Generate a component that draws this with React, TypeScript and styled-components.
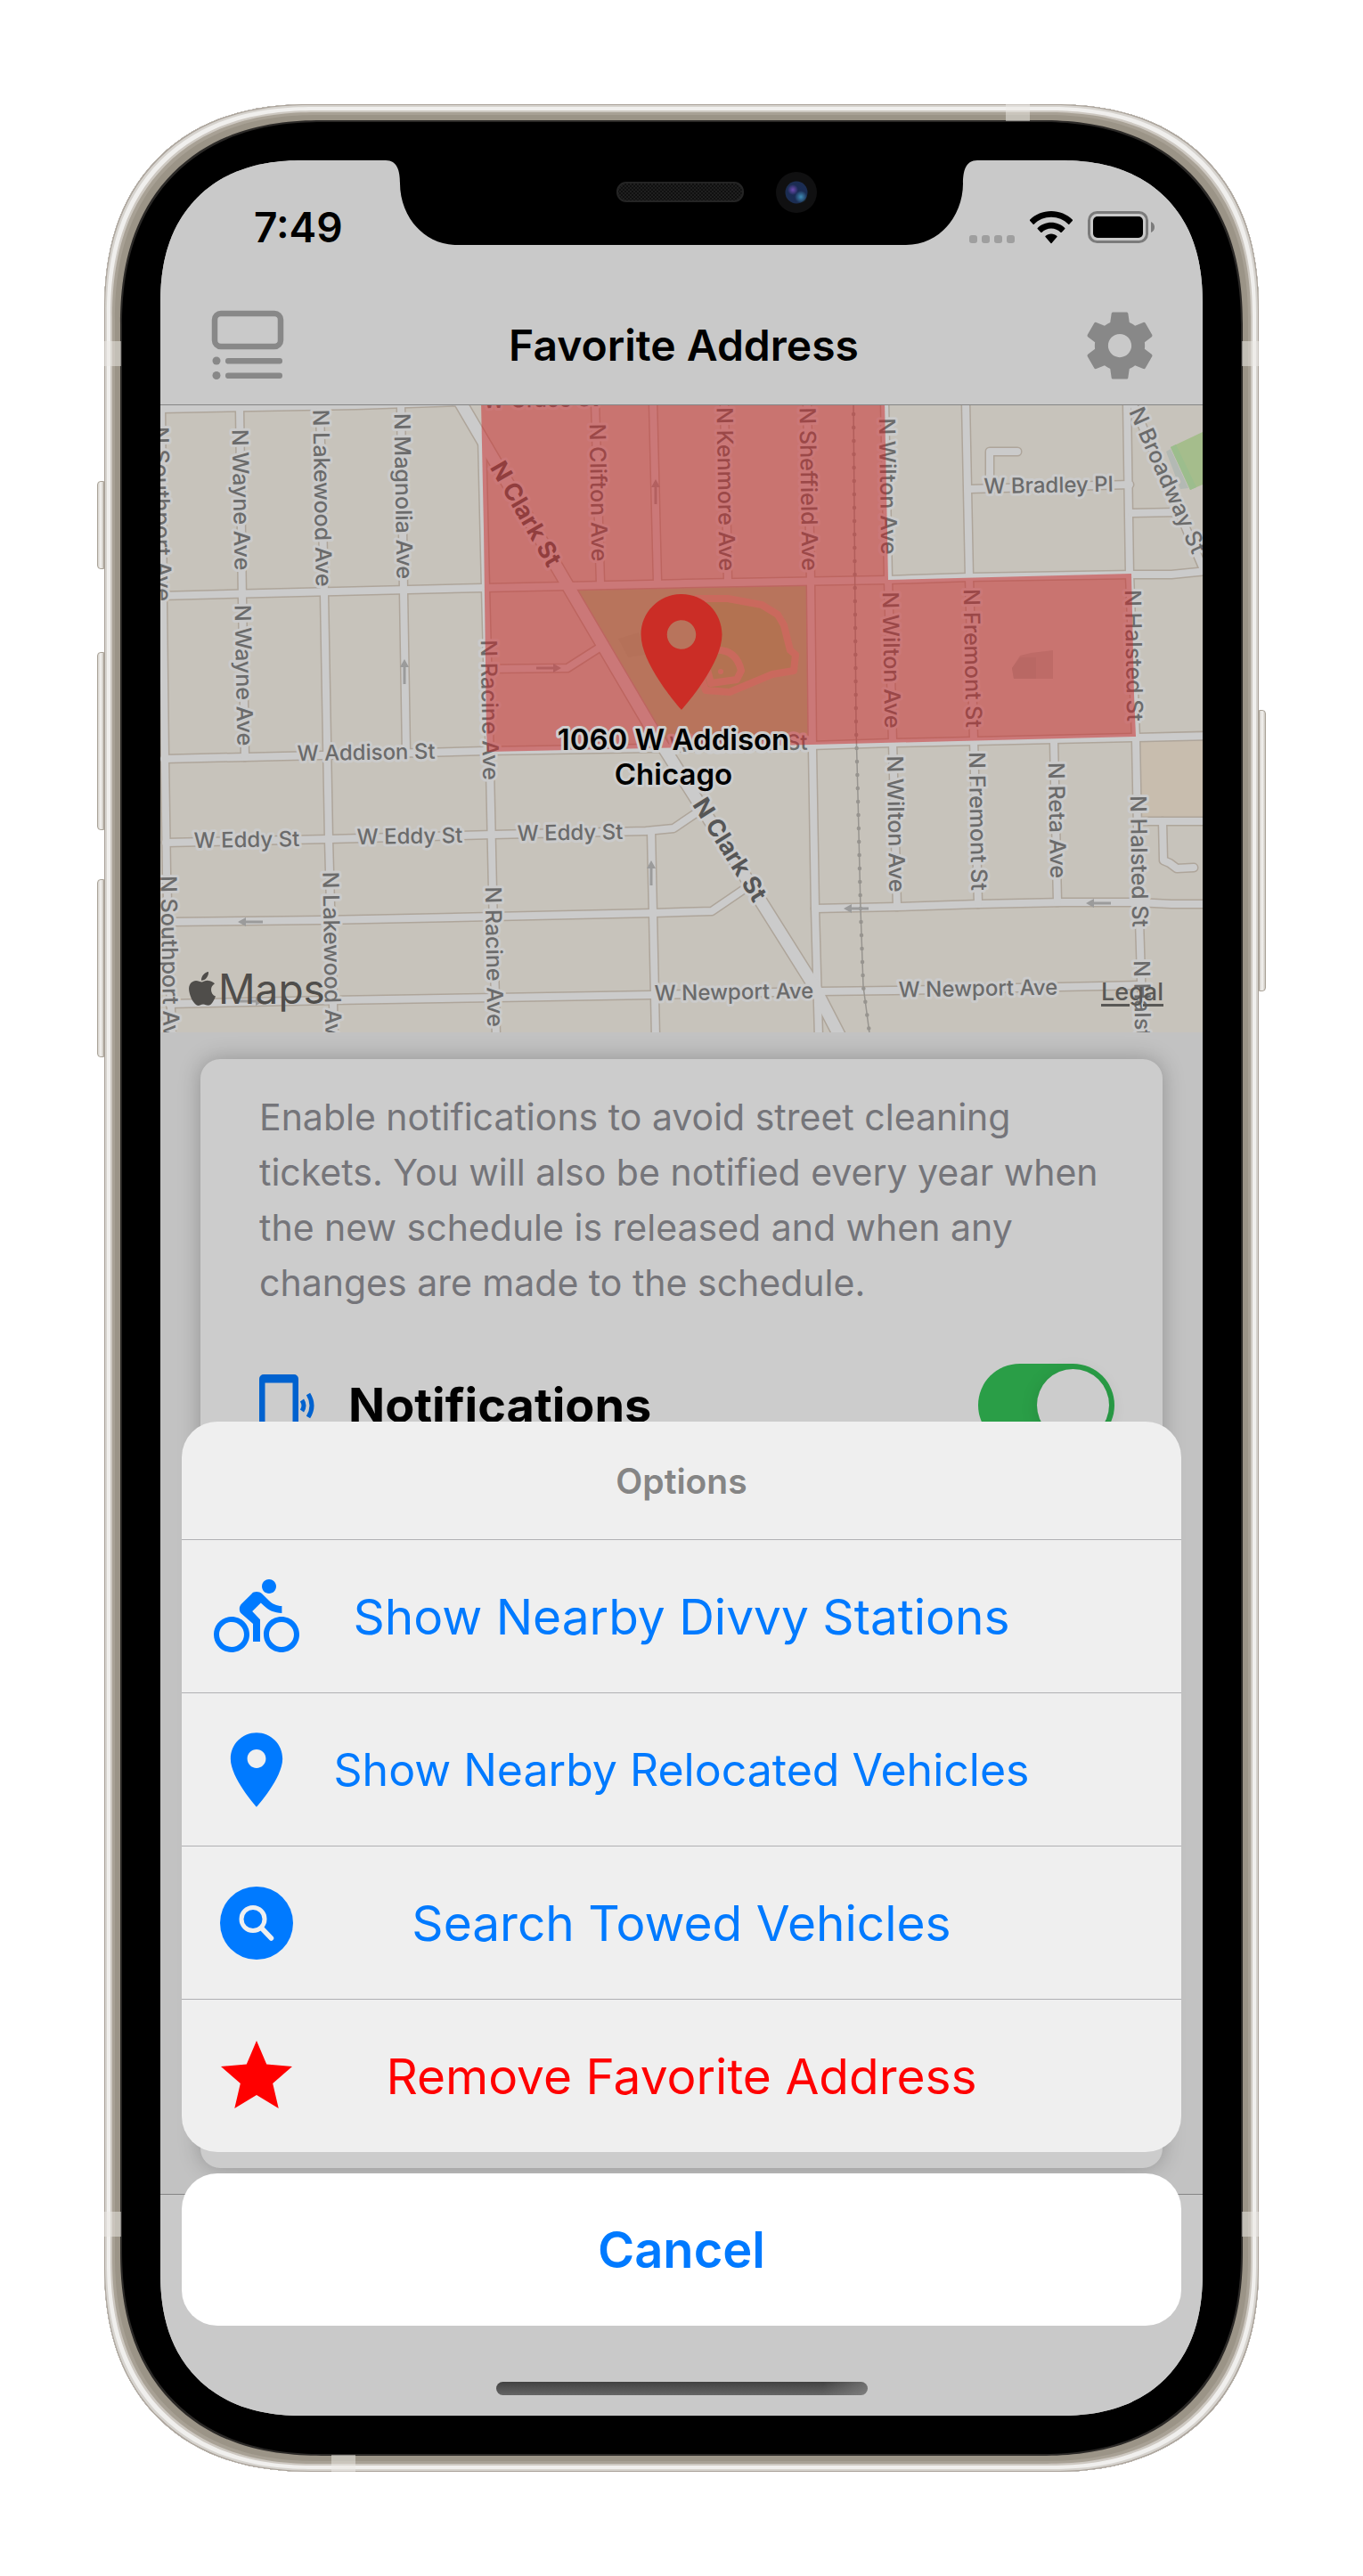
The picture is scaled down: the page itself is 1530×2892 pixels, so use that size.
import React from "react";
import styled, { createGlobalStyle } from "styled-components";

const font = `Inter, "Liberation Sans", sans-serif`;

const blue = "#007aff";
const red = "#ff0000";

const GlobalStyle = createGlobalStyle`
  *, *::before, *::after { box-sizing: border-box; }
  body { margin: 0; background: #fff; font-family: ${font}; }
  button { font-family: inherit; }
`;

/* ---------- Device ---------- */

const Page = styled.main`
  display: flex;
  justify-content: center;
  padding: 117px;
`;

const Device = styled.div`
  position: relative;
  width: 100%;
  max-width: 1296px;
  padding: 63px;
  background: #000;
  border-radius: 205px;
  box-shadow:
    inset 0 0 0 1px #a9a198,
    inset 0 0 0 3px #d6d3ce,
    inset 0 0 0 7px #f0efed,
    inset 0 0 0 9px #cdc8c1,
    inset 0 0 0 12px #a8a195,
    inset 0 0 0 18px #9b9487,
    inset 0 0 0 20px #2b2927;
  @supports (corner-shape: superellipse(1.2)) {
    border-radius: 232px;
    corner-shape: superellipse(1.2);
  }
`;

const Screen = styled.div`
  position: relative;
  display: grid;
  aspect-ratio: 1170 / 2532;
  overflow: hidden;
  background: #c2c2c2;
  border-radius: 142px;
  @supports (corner-shape: superellipse(1.2)) {
    border-radius: 160px;
    corner-shape: superellipse(1.2);
  }
`;

const SideButton = styled.span<{ $side: "left" | "right"; $top: number; $length: number }>`
  position: absolute;
  ${(p) => p.$side}: -8px;
  top: ${(p) => p.$top}px;
  width: 8px;
  height: ${(p) => p.$length}px;
  border: 1px solid #aaa398;
  border-radius: ${(p) => (p.$side === "left" ? "4px 0 0 4px" : "0 4px 4px 0")};
  background: linear-gradient(to right, #d5d1cb, #f4f3f1, #cbc6be);
`;

const AntennaBand = styled.span<{ $edge: "left" | "right" | "top" | "bottom"; $at: number }>`
  position: absolute;
  ${(p) => p.$edge}: 0;
  ${(p) => (p.$edge === "left" || p.$edge === "right" ? "top" : "left")}: ${(p) => p.$at}px;
  width: ${(p) => (p.$edge === "left" || p.$edge === "right" ? 19 : 27)}px;
  height: ${(p) => (p.$edge === "left" || p.$edge === "right" ? 28 : 19)}px;
  background: rgba(236, 234, 230, 0.5);
`;

const Notch = styled.svg`
  position: absolute;
  top: 0;
  left: 50%;
  width: 664px;
  height: 96px;
  transform: translateX(-50%);
`;

/* ---------- App underneath the sheet ---------- */

const AppLayer = styled.div`
  grid-area: 1 / 1;
  display: flex;
  flex-direction: column;
  min-width: 0;
`;

const Header = styled.header`
  background: #c9c9c9;
  border-bottom: 1px solid #858585;
`;

const StatusBar = styled.div`
  display: flex;
  align-items: center;
  justify-content: space-between;
  height: 141px;
  padding: 9px 54px 0 105px;
`;

const Time = styled.time`
  font-size: 46px;
  line-height: 48px;
  font-weight: 600;
  color: #000;
`;

const StatusIcons = styled.div`
  display: flex;
  align-items: flex-end;
  gap: 17px;
  svg { display: block; }
`;

const NavBar = styled.div`
  display: grid;
  grid-template-columns: 90px 1fr 90px;
  align-items: center;
  height: 133px;
  padding: 0 48px 0 53px;
`;

const Title = styled.h1`
  margin: 0;
  font-size: 48px;
  line-height: 60px;
  font-weight: 600;
  text-align: center;
  color: #000;
`;

const IconButton = styled.button`
  display: flex;
  align-items: center;
  justify-content: center;
  width: 90px;
  height: 90px;
  padding: 0;
  border: 0;
  background: none;
  color: #888;
`;

const MapPanel = styled.section`
  position: relative;
`;

const MapDrawing = styled.svg`
  display: block;
  width: 100%;
  aspect-ratio: 1170 / 704;
  font-family: ${font};
`;

const MapBrand = styled.div`
  position: absolute;
  left: 32px;
  bottom: 19px;
  display: flex;
  align-items: center;
  gap: 3px;
  font-size: 46px;
  line-height: 60px;
  color: #4f4d4a;
`;

const LegalLink = styled.a`
  position: absolute;
  right: 44px;
  bottom: 29px;
  font-size: 27px;
  line-height: 32px;
  font-weight: 500;
  color: #595855;
  text-decoration: underline;
  text-decoration-thickness: 3px;
  text-underline-offset: 4px;
`;

const Card = styled.section`
  flex: 1;
  margin: 30px 45px 29px;
  padding: 34px 54px 48px 66px;
  border-radius: 22px;
  background: #ccc;
  box-shadow: 0 0 24px rgba(0, 0, 0, 0.25);
`;

const CardText = styled.p`
  margin: 0;
  font-size: 41px;
  line-height: 62px;
  color: #75757a;
`;

const SettingRow = styled.div`
  display: flex;
  align-items: center;
  gap: 36px;
  margin-top: 60px;
`;

const SettingLabel = styled.label`
  flex: 1;
  font-size: 54px;
  line-height: 64px;
  font-weight: 700;
  color: #000;
`;

const Toggle = styled.input`
  appearance: none;
  flex: none;
  display: flex;
  justify-content: flex-end;
  width: 153px;
  height: 93px;
  margin: 0;
  padding: 6px;
  border-radius: 47px;
  background: #2a9e47;
  &::before {
    content: "";
    width: 81px;
    height: 81px;
    border-radius: 50%;
    background: #ccc;
    box-shadow: 0 4px 20px rgba(0, 0, 0, 0.12);
  }
`;

const TabBar = styled.footer`
  height: 249px;
  border-top: 1px solid #858585;
  background: #c9c9c9;
`;

/* ---------- Action sheet ---------- */

const SheetLayer = styled.div`
  grid-area: 1 / 1;
  position: relative;
  display: flex;
  flex-direction: column;
  justify-content: flex-end;
  min-width: 0;
  padding: 0 24px 23px;
`;

const Sheet = styled.section`
  overflow: hidden;
  border-radius: 40px;
  background: #efefef;
`;

const SheetTitle = styled.h2`
  margin: 0;
  height: 132px;
  font-size: 39px;
  line-height: 134px;
  font-weight: 600;
  text-align: center;
  color: #858585;
`;

const SheetAction = styled.button<{ $color: string; $compact?: boolean }>`
  display: grid;
  grid-template-columns: 96px 1fr 96px;
  align-items: center;
  width: 100%;
  height: 172px;
  padding: 0 36px;
  border: 0;
  border-top: 1px solid #b0b0b3;
  background: none;
  font-size: ${(p) => (p.$compact ? 50 : 55)}px;
  line-height: 72px;
  white-space: nowrap;
  text-align: center;
  color: ${(p) => p.$color};
  svg { display: block; justify-self: center; overflow: visible; }
`;

const CancelButton = styled.button`
  height: 171px;
  margin-top: 24px;
  border: 0;
  border-radius: 40px;
  background: #fff;
  font-size: 56px;
  line-height: 72px;
  font-weight: 600;
  color: ${blue};
`;

const HomeIndicator = styled.div`
  align-self: center;
  width: 417px;
  height: 15px;
  margin-top: 63px;
  border-radius: 8px;
  background: linear-gradient(to right, transparent 88%, rgba(150, 150, 150, 0.5)),
    linear-gradient(#414141, #666);
`;

/* ---------- Icons ---------- */

const placePath =
  "M12 2C8.13 2 5 5.13 5 9c0 5.25 7 13 7 13s7-7.75 7-13c0-3.87-3.13-7-7-7zm0 9.5c-1.38 0-2.5-1.12-2.5-2.5s1.12-2.5 2.5-2.5 2.5 1.12 2.5 2.5-1.12 2.5-2.5 2.5z";

const ListIcon = () => (
  <svg width="82" height="80" viewBox="0 0 82 80" fill="#888">
    <rect x="4" y="4" width="74" height="37" rx="7" fill="none" stroke="#888" strokeWidth="6.5" />
    <circle cx="6" cy="57" r="4.5" />
    <rect x="16" y="54" width="64" height="6.5" rx="3" />
    <circle cx="6" cy="73.500" r="4.500" />
    <rect x="16" y="70.500" width="64" height="6.500" rx="3" />
  </svg>
);

const GearIcon = () => (
  <svg width="90" height="90" viewBox="0 0 24 24" fill="currentColor">
    <path d="M19.43 12.98c.04-.32.07-.64.07-.98s-.03-.66-.07-.98l2.11-1.65c.19-.15.24-.42.12-.64l-2-3.46c-.12-.22-.39-.3-.61-.22l-2.49 1c-.52-.4-1.08-.73-1.69-.98l-.38-2.65C14.46 2.18 14.25 2 14 2h-4c-.25 0-.46.18-.49.42l-.38 2.65c-.61.25-1.17.59-1.69.98l-2.49-1c-.23-.09-.49 0-.61.22l-2 3.46c-.13.22-.07.49.12.64l2.11 1.65c-.04.32-.07.65-.07.98s.03.66.07.98l-2.11 1.65c-.19.15-.24.42-.12.64l2 3.46c.12.22.39.3.61.22l2.49-1c.52.4 1.08.73 1.69.98l.38 2.65c.03.24.24.42.49.42h4c.25 0 .46-.18.49-.42l.38-2.65c.61-.25 1.17-.59 1.69-.98l2.49 1c.23.09.49 0 .61-.22l2-3.46c.12-.22.07-.49-.12-.64l-2.11-1.65zM12 15.5c-1.93 0-3.5-1.57-3.5-3.5s1.57-3.5 3.5-3.5 3.5 1.57 3.5 3.5-1.57 3.5-3.5 3.5z" />
  </svg>
);

const SignalDots = () => (
  <svg width="51" height="10" viewBox="0 0 51 10" fill="#9f9f9f">
    {[0, 14, 28, 42].map((x) => (
      <rect key={x} x={x} y="0" width="9" height="9" rx="3" />
    ))}
  </svg>
);

const WifiIcon = () => (
  <svg width="48" height="37" viewBox="0 0 48 37" fill="#000">
    <path d="M24 0C14.800 0 6.300 3.500 0 9.700c-.2.300-.2.700 0 1l3.700 4c.3.300.7.300 1 0C9.800 9.700 16.600 6.800 24 6.800s14.200 2.900 19.300 7.900c.3.300.7.300 1 0l3.700-4c.2-.3.200-.7 0-1C41.700 3.500 33.200 0 24 0z" />
    <path d="M24 12.700c-5.900 0-11.300 2.300-15.300 6.200-.3.300-.3.700 0 1l3.700 4c.3.300.7.300 1 0 2.800-2.700 6.500-4.300 10.600-4.300s7.800 1.600 10.600 4.300c.3.300.7.300 1 0l3.700-4c.3-.3.300-.7 0-1-4-3.900-9.400-6.200-15.300-6.200z" />
    <path d="M24 25.400c-2.500 0-4.800 1-6.500 2.600-.3.300-.3.700 0 1l6 6.900c.3.300.7.300 1 0l6-6.900c.3-.3.300-.7 0-1-1.700-1.600-4-2.600-6.500-2.600z" />
  </svg>
);

const BatteryIcon = () => (
  <svg width="75" height="37" viewBox="0 0 75 37">
    <rect x="1.500" y="1.500" width="65" height="33" rx="9" fill="none" stroke="#7b7b7b" strokeWidth="3" />
    <rect x="6" y="6" width="56" height="24" rx="5" fill="#000" />
    <path d="M71 12c2.500 1 4 3.300 4 6s-1.500 5-4 6z" fill="#7b7b7b" />
  </svg>
);

const AppleLogo = () => (
  <svg width="30" height="38" viewBox="0 0 30 38" fill="#4f4d4a">
    <path d="M22 0c.3 2.700-.8 5.200-2.300 7-1.500 1.800-3.600 3-5.700 2.800-.3-2.500.9-5 2.300-6.600C17.800 1.400 20.100.1 22 0z" />
    <path d="M29 13.300c-2.600 1.700-4 4-4 6.900 0 3.300 1.900 6.100 5 7.400-.7 2.200-1.800 4.300-3.200 6.300-1.400 2-2.900 3.900-5.200 3.900s-2.900-1.300-5.500-1.300-3.400 1.300-5.600 1.400c-2.200.1-3.900-2.100-5.400-4.100C2.200 29.700-.2 22.400.1 18.300.5 13.300 3.700 10.200 8 10c2.500 0 4.900 1.600 6.400 1.600 1.500 0 4.300-2 7.300-1.700 2.700.1 5.500 1.200 7.300 3.400z" />
  </svg>
);

const RingingPhoneIcon = () => (
  <svg width="64" height="78" viewBox="0 0 64 78">
    <path
      fill="#0062cf"
      fillRule="evenodd"
      d="M5 4h34a5 5 0 0 1 5 5v60a5 5 0 0 1-5 5H5a5 5 0 0 1-5-5V9a5 5 0 0 1 5-5zm1.500 9.500v51h31v-51z"
    />
    <path d="M48 33q4 6 0 12M55 26q8 13 0 26" fill="none" stroke="#0062cf" strokeWidth="5" />
  </svg>
);

const BikeIcon = () => (
  <svg width="96" height="96" viewBox="0 0 24 24" fill="currentColor">
    <path d="M15.5 5.500c1.100 0 2-.9 2-2s-.9-2-2-2-2 .9-2 2 .9 2 2 2zM5 12c-2.800 0-5 2.200-5 5s2.200 5 5 5 5-2.200 5-5-2.200-5-5-5zm0 8.500c-1.900 0-3.500-1.600-3.500-3.500s1.600-3.500 3.500-3.500 3.500 1.600 3.500 3.500-1.600 3.500-3.500 3.500zm5.800-10l2.400-2.400.8.8c1.300 1.300 3 2.100 5.100 2.100V9c-1.500 0-2.700-.6-3.600-1.500l-1.900-1.900c-.5-.4-1-.6-1.600-.6s-1.100.2-1.400.6L7.800 8.400c-.4.400-.6.900-.6 1.400 0 .6.200 1.100.6 1.400L11 14v5h2v-6.200l-2.200-2.300zM19 12c-2.800 0-5 2.200-5 5s2.200 5 5 5 5-2.200 5-5-2.200-5-5-5zm0 8.500c-1.900 0-3.500-1.600-3.500-3.500s1.600-3.500 3.500-3.500 3.500 1.600 3.500 3.500-1.600 3.500-3.500 3.500z" />
  </svg>
);

const PlaceIcon = () => (
  <svg width="100" height="100" viewBox="0 0 24 24" fill="currentColor">
    <path d={placePath} />
  </svg>
);

const SearchIcon = () => (
  <svg width="82" height="82" viewBox="0 0 82 82">
    <circle cx="41" cy="41" r="41" fill="currentColor" />
    <circle cx="37" cy="36.500" r="13" fill="none" stroke="#efefef" strokeWidth="5" />
    <path d="M46.500 46.500L57.500 58" stroke="#efefef" strokeWidth="5.500" strokeLinecap="round" />
  </svg>
);

const StarIcon = () => (
  <svg width="96" height="96" viewBox="0 0 24 24" fill="currentColor">
    <path d="M12 17.270L18.180 21l-1.640-7.030L22 9.240l-7.190-.61L12 2 9.190 8.630 2 9.240l5.460 4.730L5.820 21z" />
  </svg>
);

/* ---------- Map ---------- */

const roads: string[] = [
  "M175 459L400 455L520 451",
  "M175 669L543 660L770 655L997 651L1088 648L1274 645L1315 645L1355 641",
  "M184 852L361 848L545 843L910 837L1001 834L1276 828L1355 826",
  "M186 946L369 942L553 937L725 933L756 930L790 907",
  "M190 1035L361 1033L553 1029L733 1025L799 1023L840 995",
  "M915 1020L1007 1018L1098 1015L1194 1013L1276 1013L1315 1015L1355 1015",
  "M190 1127L373 1123L557 1120L731 1117L920 1113L1003 1112L1189 1108L1280 1106",
  "M181 455L183 677L185 850L187 980L193 1164",
  "M269 458L272 673L275 850",
  "M359 457L364 667L369 942L375 1164",
  "M450 455L453 663L456 845",
  "M541 490L545 660L549 817L553 1000L557 1164",
  "M668 450L674 655",
  "M733 450L738 653",
  "M813 450L817 652",
  "M906 450L910 653L912 840L915 1020L919 1164",
  "M993 450L997 650L1002 833L1007 1018",
  "M1084 450L1088 648L1093 830L1098 1015",
  "M1183 832L1187 1013",
  "M1265 450L1268 645L1275 830L1279 1033L1283 1164",
  "M1088 549L1268 544",
  "M1111 545V507H1142",
  "M1270 576L1322 575",
  "M1266 440L1350 637L1360 650",
  "M1282 922H1355",
  "M1305 922L1306 966L1313 969L1321 975L1340 974",
  "M547 751L637 750L673 727",
  "M731 933L736 1164",
];

const clark = "M510 440L637 657L731 817L851 1007L912 1104L944 1166";
const rail = "M958 450L961 817L963 893L966 1020L969 1107L976 1160";

type Label = { t: string; x: number; y: number; a: number; bold?: boolean };

const streetLabels: Label[] = [
  { t: "N Southport Ave", x: 182, y: 577, a: 89 },
  { t: "N Wayne Ave", x: 271, y: 561, a: 89 },
  { t: "N Wayne Ave", x: 274, y: 758, a: 89 },
  { t: "N Lakewood Ave", x: 362, y: 559, a: 89 },
  { t: "N Magnolia Ave", x: 453, y: 557, a: 89 },
  { t: "N Clark St", x: 590, y: 577, a: 60, bold: true },
  { t: "N Clifton Ave", x: 672, y: 553, a: 89 },
  { t: "N Racine Ave", x: 550, y: 797, a: 89 },
  { t: "W Grace St", x: 607, y: 448, a: -1 },
  { t: "N Kenmore Ave", x: 815, y: 549, a: 89 },
  { t: "N Sheffield Ave", x: 908, y: 549, a: 89 },
  { t: "N Wilton Ave", x: 997, y: 546, a: 89 },
  { t: "W Bradley Pl", x: 1177, y: 544, a: -1 },
  { t: "N Broadway St", x: 1311, y: 539, a: 66 },
  { t: "N Wilton Ave", x: 1001, y: 741, a: 89 },
  { t: "N Fremont St", x: 1092, y: 739, a: 89 },
  { t: "N Halsted St", x: 1273, y: 736, a: 89 },
  { t: "W Addison St", x: 411, y: 844, a: -1 },
  { t: "W Addison St", x: 829, y: 834, a: -1 },
  { t: "W Eddy St", x: 277, y: 942, a: -1 },
  { t: "W Eddy St", x: 460, y: 938, a: -1 },
  { t: "W Eddy St", x: 640, y: 934, a: -1 },
  { t: "N Southport Ave", x: 191, y: 1081, a: 89 },
  { t: "N Lakewood Ave", x: 373, y: 1078, a: 89 },
  { t: "N Racine Ave", x: 555, y: 1074, a: 89 },
  { t: "N Clark St", x: 819, y: 954, a: 58, bold: true },
  { t: "N Wilton Ave", x: 1006, y: 925, a: 89 },
  { t: "N Fremont St", x: 1098, y: 922, a: 89 },
  { t: "N Reta Ave", x: 1187, y: 921, a: 89 },
  { t: "N Halsted St", x: 1279, y: 967, a: 89 },
  { t: "N Halsted St", x: 1283, y: 1152, a: 89 },
  { t: "W Newport Ave", x: 824, y: 1113, a: -1 },
  { t: "W Newport Ave", x: 1098, y: 1109, a: -1 },
];

const arrows = [
  { x: 736, y: 552, a: -90 },
  { x: 454, y: 754, a: -90 },
  { x: 616, y: 750, a: 0 },
  { x: 281, y: 1035, a: 180 },
  { x: 282, y: 1124, a: 0 },
  { x: 731, y: 980, a: -90 },
  { x: 961, y: 1020, a: 180 },
  { x: 1233, y: 1014, a: 180 },
];

const StreetText = styled.text<{ $size: number; $bold?: boolean }>`
  font-size: ${(p) => p.$size}px;
  font-weight: ${(p) => (p.$bold ? 700 : 500)};
  text-anchor: middle;
  fill: ${(p) => (p.$bold ? "#565656" : "#6b6b6b")};
  stroke: #cbcbcb;
  stroke-width: 6px;
  stroke-linejoin: round;
  paint-order: stroke;
`;

const labelSize = (l: Label) => (l.bold ? 27 : l.a > 0 ? 25 : 24);

const PinText = styled.text`
  font-size: 33px;
  font-weight: 600;
  text-anchor: middle;
  fill: #000;
  stroke: #cdcdcd;
  stroke-width: 6px;
  stroke-linejoin: round;
  paint-order: stroke;
`;

const StreetMap = () => (
  <MapDrawing
    viewBox="180 455 1170 704"
    preserveAspectRatio="xMidYMid slice"
    role="img"
    aria-label="Map around 1060 W Addison, Chicago"
  >
    <rect x="180" y="455" width="1170" height="704" fill="#c7c3bb" />
    <polygon points="1279,830 1350,829 1350,922 1279,922" fill="#c8bdae" />
    <polygon points="1309,507 1314,504 1334,548 1325,549" fill="#b3b9b4" />
    <polygon points="1314,502 1350,485 1350,544 1336,550" fill="#a5bd8c" />
    <polygon points="1314,502 1320,499 1343,547 1336,550" fill="#9cbd8d" />
    <polygon points="647,661 905,657 908,834 752,838" fill="#a5c393" />
    <polygon points="694,717 717,710 725,735 705,738" fill="#9fbc8d" />
    <path d="M790 672L817 672L855 678L875 688L887 727L894 735L892 753L867 757L819 777L792 775Z" fill="#9bbf7c" />
    <g fill="none" stroke="#c9ad95" strokeWidth="8" strokeLinejoin="round">
      <path d="M780 672L817 672L855 679L873 690L880 702L887 730L893 735L891 753L867 757L819 777L792 775L780 740" />
      <path d="M800 730Q826 727 832 753L827 763L798 767L794 752" />
    </g>
    <circle cx="809" cy="754" r="3" fill="#c9ad95" />
    <polygon points="1136,750 1145,736 1157,733 1182,730 1182,762 1138,762" fill="#b1b1a9" />
    <polygon points="1136,750 1145,738 1163,738 1163,762 1138,762" fill="#a7aba3" />
    <g fill="none" strokeLinejoin="round" strokeLinecap="round">
      {roads.map((d) => (
        <path key={d} d={d} stroke="#aea59a" strokeWidth="11" />
      ))}
      <path d={clark} stroke="#aea59a" strokeWidth="16" />
      {roads.map((d) => (
        <path key={d} d={d} stroke="#cbcbcb" strokeWidth="8" />
      ))}
      <path d={clark} stroke="#cbcbcb" strokeWidth="13" />
      <path d={rail} stroke="#97948f" strokeWidth="1.500" />
      <path d={rail} stroke="#97948f" strokeWidth="4.500" strokeDasharray="0 15" />
    </g>
    {arrows.map((a) => (
      <path
        key={`${a.x}-${a.y}`}
        transform={`translate(${a.x} ${a.y}) rotate(${a.a})`}
        d="M-14 -1.500H5V-5L14 0L5 5V1.500H-14Z"
        fill="#9b9b9b"
      />
    ))}
    {streetLabels.map((l) => (
      <StreetText
        key={`${l.x}-${l.y}`}
        $size={labelSize(l)}
        $bold={l.bold}
        transform={`translate(${l.x} ${l.y}) rotate(${l.a})`}
        y="9"
      >
        {l.t}
      </StreetText>
    ))}
    <polygon
      points="540,450 543,595 546,820 547,844 910,836 1275,827 1273,780 1270,644 997,651 993,450"
      fill="#cb2525"
      fillOpacity="0.500"
    />
    <path transform="translate(687 654) scale(6.500)" d={placePath} fill="#cb2d26" />
    <PinText x="756" y="842">
      1060 W Addison
    </PinText>
    <PinText x="756" y="881">
      Chicago
    </PinText>
  </MapDrawing>
);

const NotchDrawing = () => (
  <Notch viewBox="0 0 664 96" aria-hidden="true">
    <defs>
      <pattern id="mesh" width="4" height="4" patternUnits="userSpaceOnUse">
        <rect width="4" height="4" fill="#101010" />
        <rect width="2" height="2" fill="#1f1f1f" />
        <rect x="2" y="2" width="2" height="2" fill="#1f1f1f" />
      </pattern>
      <radialGradient id="lens" cx="0.500" cy="0.500" r="0.500">
        <stop offset="0" stopColor="#1a2a55" />
        <stop offset="1" stopColor="#1b2d52" />
      </radialGradient>
      <radialGradient id="violet">
        <stop offset="0" stopColor="#6d4bb0" />
        <stop offset="1" stopColor="#6d4bb0" stopOpacity="0" />
      </radialGradient>
      <radialGradient id="cyan">
        <stop offset="0" stopColor="#3f8cb5" />
        <stop offset="1" stopColor="#3f8cb5" stopOpacity="0" />
      </radialGradient>
    </defs>
    <path d="M0 0C13 0 16 12 16 26C16 62 42 95 80 95H584C622 95 648 62 648 26C648 12 651 0 664 0Z" fill="#000" />
    <rect x="260" y="25" width="141" height="21" rx="10" fill="url(#mesh)" stroke="#242424" strokeWidth="2" />
    <circle cx="461" cy="36" r="23" fill="#101011" />
    <circle cx="461" cy="36" r="12.500" fill="url(#lens)" />
    <circle cx="457" cy="33" r="6" fill="url(#violet)" />
    <circle cx="466" cy="41" r="7" fill="url(#cyan)" />
  </Notch>
);

const actions = [
  { label: "Show Nearby Divvy Stations", icon: <BikeIcon />, color: blue },
  { label: "Show Nearby Relocated Vehicles", icon: <PlaceIcon />, color: blue, compact: true },
  { label: "Search Towed Vehicles", icon: <SearchIcon />, color: blue },
  { label: "Remove Favorite Address", icon: <StarIcon />, color: red },
];

export default function App() {
  return (
    <>
      <GlobalStyle />
      <Page>
        <Device>
          <SideButton $side="left" $top={423} $length={99} />
          <SideButton $side="left" $top={615} $length={200} />
          <SideButton $side="left" $top={870} $length={200} />
          <SideButton $side="right" $top={680} $length={316} />
          <AntennaBand $edge="left" $at={266} />
          <AntennaBand $edge="right" $at={266} />
          <AntennaBand $edge="top" $at={1012} />
          <AntennaBand $edge="bottom" $at={255} />
          <AntennaBand $edge="left" $at={2366} />
          <AntennaBand $edge="right" $at={2366} />
          <Screen>
            <AppLayer>
              <Header>
                <StatusBar>
                  <Time>7:49</Time>
                  <StatusIcons>
                    <SignalDots />
                    <WifiIcon />
                    <BatteryIcon />
                  </StatusIcons>
                </StatusBar>
                <NavBar>
                  <IconButton aria-label="Addresses">
                    <ListIcon />
                  </IconButton>
                  <Title>Favorite Address</Title>
                  <IconButton aria-label="Settings">
                    <GearIcon />
                  </IconButton>
                </NavBar>
              </Header>
              <MapPanel>
                <StreetMap />
                <MapBrand>
                  <AppleLogo />
                  Maps
                </MapBrand>
                <LegalLink href="#legal">Legal</LegalLink>
              </MapPanel>
              <Card>
                <CardText>
                  Enable notifications to avoid street cleaning tickets. You will also be notified
                  every year when the new schedule is released and when any changes are made to the
                  schedule.
                </CardText>
                <SettingRow>
                  <RingingPhoneIcon />
                  <SettingLabel htmlFor="notifications">Notifications</SettingLabel>
                  <Toggle id="notifications" type="checkbox" role="switch" defaultChecked />
                </SettingRow>
              </Card>
              <TabBar />
            </AppLayer>
            <SheetLayer>
              <Sheet aria-labelledby="sheet-title">
                <SheetTitle id="sheet-title">Options</SheetTitle>
                {actions.map((a) => (
                  <SheetAction key={a.label} $color={a.color} $compact={a.compact}>
                    {a.icon}
                    <span>{a.label}</span>
                  </SheetAction>
                ))}
              </Sheet>
              <CancelButton>Cancel</CancelButton>
              <HomeIndicator />
            </SheetLayer>
            <NotchDrawing />
          </Screen>
        </Device>
      </Page>
    </>
  );
}
